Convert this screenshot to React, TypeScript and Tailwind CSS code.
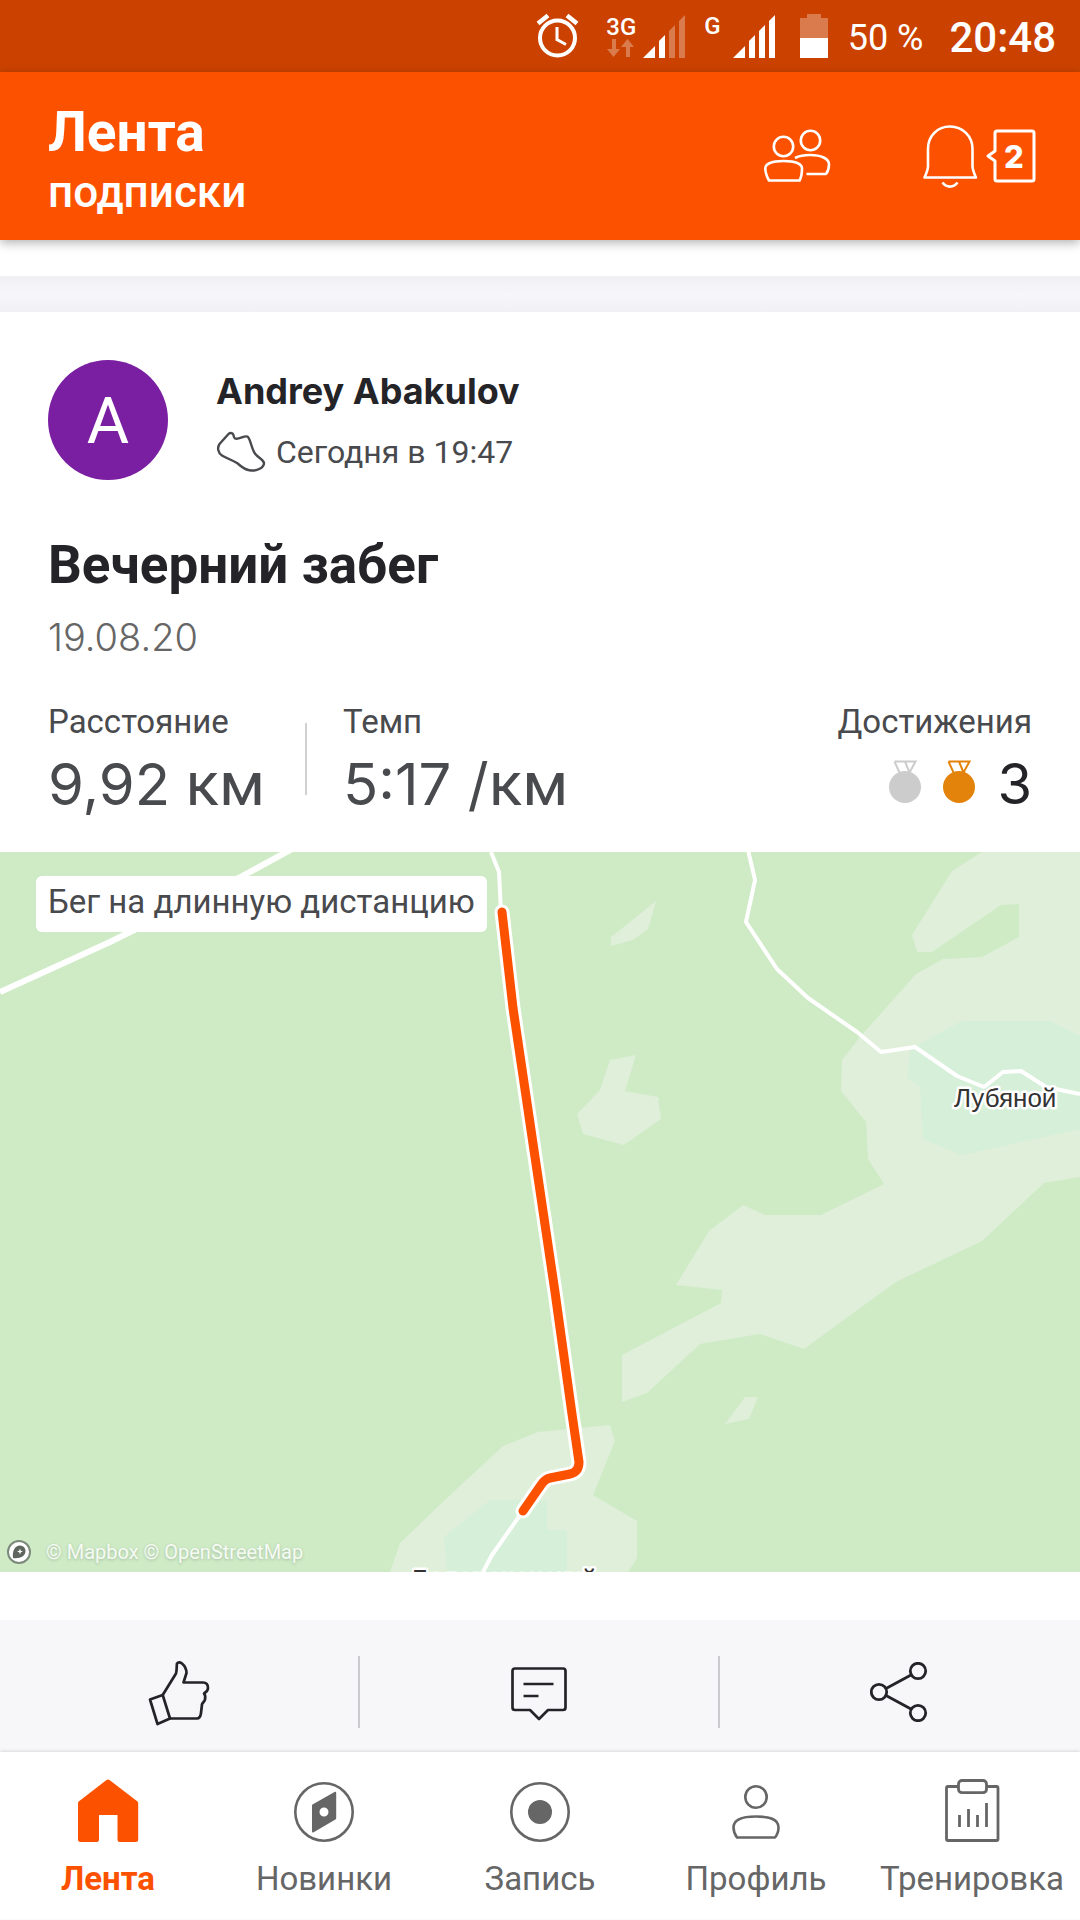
import type { ReactNode } from "react";

const tabs = [
  { id: "feed", label: "Лента", icon: <HomeIcon /> },
  { id: "explore", label: "Новинки", icon: <CompassIcon /> },
  { id: "record", label: "Запись", icon: <RecordIcon /> },
  { id: "profile", label: "Профиль", icon: <ProfileIcon /> },
  { id: "training", label: "Тренировка", icon: <TrainingIcon /> },
];

function HomeIcon() {
  return (
    <svg width="64" height="64" viewBox="0 0 64 64" fill="currentColor">
      <path d="M30.5 1q1.500-1.200 3 0L61.500 22.500q.7.600.7 1.500V60.500q0 2.500-2.500 2.500H44q-2.500 0-2.500-2.500V36H23V60.500q0 2.500-2.500 2.500H4.500Q2 63 2 60.500V24q0-.9.700-1.500Z" />
    </svg>
  );
}

function CompassIcon() {
  return (
    <svg width="64" height="64" viewBox="0 0 64 64" fill="none">
      <circle cx="32" cy="33" r="28.700" stroke="currentColor" strokeWidth="2.600" />
      <path
        fill="currentColor"
        fillRule="evenodd"
        d="M20.500 25.500 42.500 13q1.700-.8 1.700 1V39q0 1-.8 1.500L21.700 53.200Q20 54 20 52.200V26.500q0-.6.5-1ZM32 28.500a4.500 4.500 0 1 0 0 9 4.500 4.500 0 0 0 0-9Z"
      />
    </svg>
  );
}

function RecordIcon() {
  return (
    <svg width="64" height="64" viewBox="0 0 64 64" fill="none">
      <circle cx="32" cy="33" r="28.700" stroke="currentColor" strokeWidth="2.600" />
      <circle cx="32" cy="33" r="12" fill="currentColor" />
    </svg>
  );
}

function ProfileIcon() {
  return (
    <svg width="64" height="64" viewBox="0 0 64 64" fill="none" stroke="currentColor" strokeWidth="2.600">
      <circle cx="32" cy="18" r="10.700" />
      <path strokeLinejoin="round" d="M13 58.500C10.500 55 9.500 52 9.500 48.500 9.500 40 19 37.500 32 37.500S54.500 40 54.500 48.500C54.500 52 53.500 55.500 51 58.500Z" />
    </svg>
  );
}

function TrainingIcon() {
  return (
    <svg width="64" height="64" viewBox="0 0 64 64" fill="none" stroke="currentColor" strokeWidth="2.800">
      <path d="M18 7.500H8Q6.500 7.500 6.500 9V60Q6.500 61.500 8 61.500H56.500Q58 61.500 58 60V9Q58 7.500 56.500 7.500H46.500" />
      <rect x="18.500" y="1.500" width="28" height="12.200" rx="3.500" />
      <path d="M19.500 36V48M28.500 30V48M37.500 36V48M46.500 24V48" />
    </svg>
  );
}

function Signal({ bars }: { bars: number }) {
  const shapes = ["0,43 12,31 12,43", "16,43 16,26 22,20 22,43", "26,43 26,16 32,10 32,43", "36,43 36,6 42,0 42,43"];
  return (
    <svg width="43" height="43" viewBox="0 0 43 43" fill="white">
      {shapes.map((points, i) => (
        <polygon key={i} points={points} opacity={i < bars ? 1 : 0.3} />
      ))}
    </svg>
  );
}

function StatusBar() {
  return (
    <div className="flex h-[72px] items-center justify-end bg-[#cb4200] pr-6 text-white">
      <svg className="mr-7" width="43" height="46" viewBox="0 0 43 46" fill="none" stroke="white">
        <circle cx="21.500" cy="25" r="17.500" strokeWidth="4" />
        <path d="M2 10.500 12 2.500M41 10.500 31 2.500" strokeWidth="4.500" />
        <path d="M21 14V26.500L30 31.500" strokeWidth="3" />
      </svg>
      <div className="mr-2 flex w-7 flex-col items-center">
        <span className="text-2xl font-medium leading-6">3G</span>
        <svg width="28" height="18" viewBox="0 0 28 18" fill="white" opacity="0.300">
          <path d="M5 0h4v10h4L6.500 18 0 10h5ZM19 18h4V8h4L20.500 0 14 8h5Z" />
        </svg>
      </div>
      <Signal bars={2} />
      <span className="mb-5 ml-[18px] mr-3 text-2xl font-medium leading-6">G</span>
      <Signal bars={4} />
      <svg className="ml-6 mr-5" width="28" height="44" viewBox="0 0 28 44" fill="white">
        <path d="M0 4H7V0H21V4H28V24H0Z" opacity="0.300" />
        <path d="M0 24H28V44H0Z" />
      </svg>
      <span className="mr-[26px] pt-1 text-[36px] leading-10">50 %</span>
      <span className="pt-1 text-[42px] font-medium leading-10">20:48</span>
    </div>
  );
}

function Header() {
  return (
    <header className="relative z-10 flex items-center justify-between bg-[#fc5200] pl-12 pr-11 text-white shadow-[0_3px_10px_rgba(0,0,0,0.3)]">
      <div className="pb-5 pt-7">
        <h1 className="text-[55px] font-bold leading-[64px]">Лента</h1>
        <p className="text-[44px] font-medium leading-[56px]">подписки</p>
      </div>
      <div className="flex items-center">
        <button type="button" aria-label="Друзья" className="mr-[89px]">
          <svg width="70" height="56" viewBox="0 0 70 56" fill="none" stroke="white" strokeWidth="2.600" strokeLinejoin="round">
            <circle cx="20.500" cy="18.500" r="9.700" />
            <circle cx="47.500" cy="12.500" r="9.700" />
            <path d="M6 52.500C3.500 48 2.300 44 2.300 40.500 2.300 35.500 10 33 20.500 33S39 35.500 39 40.500C39 45 38.500 49 36.500 52.500Z" />
            <path d="M32 30C36 28 41 27 47 27 58 27 66 30.500 66 36.500 66 40.500 65 43.500 63 46H43.500" />
          </svg>
        </button>
        <button type="button" aria-label="Уведомления" className="flex items-center gap-2">
          <svg width="56" height="66" viewBox="0 0 56 66" fill="none" stroke="white" strokeWidth="2.600" strokeLinejoin="round">
            <path d="M2.500 54.500C4.500 50 6 47 6 43V26C6 13 15.500 3.500 28 3.500S50.500 13 50.500 26V43C50.500 47 52 50 54 54.500Z" />
            <path d="M20.500 59.500C24.500 65 31.500 65 35.500 59.500" />
          </svg>
          <svg width="50" height="56" viewBox="0 0 50 56" fill="none" stroke="white" strokeWidth="3" strokeLinejoin="round">
            <path d="M11 3H46Q48 3 48 5V51Q48 53 46 53H11Q9 53 9 51V33L2 28 9 23V5Q9 3 11 3Z" />
            <text x="28" y="40" textAnchor="middle" fill="white" stroke="none" className="font-['Inter'] text-[31px] font-extrabold">
              2
            </text>
          </svg>
        </button>
      </div>
    </header>
  );
}

function Stat({ label, children }: { label: string; children: ReactNode }) {
  return (
    <div>
      <dt className="text-[33px] leading-10 text-[#494a4d]">{label}</dt>
      <dd className="mt-[10px] text-[62px] leading-[64px] text-[#494a4d]">{children}</dd>
    </div>
  );
}

function Medal({ color }: { color: string }) {
  return (
    <svg width="32" height="48" viewBox="0 0 32 48" fill="none" stroke={color} strokeWidth="2">
      <path d="M5.500 1.500H26.500L20.500 12.500M10.500 12.500 5.500 1.500M16 1.500 20.500 12.500" />
      <circle cx="16" cy="27" r="16" fill={color} stroke="none" />
    </svg>
  );
}

function RouteMap() {
  return (
    <div className="relative overflow-hidden bg-[#ceebc6]">
      <svg className="block h-auto w-full" viewBox="0 0 1080 720" fill="none">
        {/* Fields */}
        <g fill="#dfefd9">
          <path d="M982 0 952 19 912 83 917 100H932L1001 53 1019 52V85L982 105 943 107 916 122 860 185 842 208 841 239 866 270 868 307 884 332 821 363H765L743 353 709 379 676 433 722 438 721 451 622 503V550L647 541 700 492 760 482 804 497 896 430 982 389 1044 331 1080 325V0Z" />
          <path d="M656 49 611 85V94L633 88 648 77Z" />
          <path d="M636 203 610 208 600 238 577 262 583 282 624 293 661 267 658 245 625 239Z" />
          <path d="M758 545H745L725 572 749 567Z" />
          <path d="M610 573 615 589 593 643 637 669V706L628 720H390L400 691 447 646 503 594 538 580Z" />
        </g>
        {/* Villages */}
        <g fill="#d6efd8">
          <path d="M1080 184 1050 169H962L910 197 908 226 920 235 923 287 962 303 1080 277Z" />
          <path d="M447 720 444 685 490 648H547V678H567V720Z" />
        </g>
        {/* Roads */}
        <g stroke="white" strokeWidth="4" strokeLinejoin="round">
          <path strokeWidth="6" d="M292-3 237 27 110 90 0 140" />
          <path d="M491 0 499 20 501 60M523 659 492 703 483 720" />
          <path d="M748-2 755 28 746 70 777 117 808 146 857 180 881 200 915 195 957 224 984 235 1003 220 1021 219 1046 235 1080 242" />
        </g>
        {/* Track */}
        <g strokeLinecap="round" strokeLinejoin="round">
          <path stroke="white" strokeWidth="15" d="M502 60 513 156 535 305 555 440 572 562 579 610Q579 620 570 622L550 626Q545 627 541 633L523 659" />
          <path stroke="#fc5200" strokeWidth="9" d="M502 60 513 156 535 305 555 440 572 562 579 610Q579 620 570 622L550 626Q545 627 541 633L523 659" />
        </g>
        <g fill="#333" stroke="white" strokeWidth="5" strokeLinejoin="round" paintOrder="stroke" className="font-['Liberation_Sans',sans-serif] text-[26px]">
          <text x="954" y="255">Лубяной</text>
          <text x="412" y="736">Белореченский</text>
        </g>
      </svg>
      <span className="absolute left-9 top-6 rounded-md bg-white px-3 pb-[10px] pt-[6px] text-[33px] leading-10 text-[#494a4d]">
        Бег на длинную дистанцию
      </span>
      <div className="absolute bottom-1 left-[6px] flex items-center gap-[14px] text-xl leading-8 text-white">
        <svg width="26" height="26" viewBox="0 0 26 26">
          <circle cx="13" cy="13" r="11" fill="white" stroke="#7b8a7b" strokeWidth="2" />
          <path fill="#5f665f" d="M7 19C6 12 9 6.500 14 6.500A5.500 5.500 0 0 1 19.500 12C19.500 17 14 20 7 19Z" />
          <path fill="white" d="M14 9.500 14.800 11.700 17 12.500 14.800 13.300 14 15.500 13.200 13.300 11 12.500 13.200 11.700Z" />
        </svg>
        <span className="opacity-80 [text-shadow:0_1px_3px_rgba(0,0,0,0.25)]">
          <a href="#mapbox">© Mapbox</a> <a href="#osm">© OpenStreetMap</a>
        </span>
      </div>
    </div>
  );
}

function ActivityCard() {
  return (
    <article className="bg-white pt-12">
      <div className="px-12">
        {/* Athlete */}
        <div className="flex h-[120px] items-center">
          <div className="flex h-[120px] w-[120px] items-center justify-center rounded-full bg-[#7b1fa2] pt-1 text-[65px] text-white">
            A
          </div>
          <div className="ml-12">
            <p className="font-['Inter'] text-[36px] font-bold leading-[54px] text-[#242428]">Andrey Abakulov</p>
            <p className="mt-[10px] flex items-center gap-[10px] text-[32px] leading-12 text-[#494a4d]">
              <svg width="50" height="42" viewBox="0 0 50 42" fill="none" stroke="currentColor" strokeWidth="2.400" strokeLinejoin="round">
                <path d="M12.500 3 3.500 13C1 17 2 22 6 24.500 10 27 16 29 21 32 25 35 28 39 35 39.500 41 40 48 37 48 32 47.500 28 41 27 38 21 35 15 34.500 9 32 6 29.500 3.500 23 9 19 7.500 17 6.500 18.500 4 16.500 2.500 15 1.500 13.500 2 12.500 3Z" />
              </svg>
              Сегодня в 19:47
            </p>
          </div>
        </div>

        <h2 className="mt-[55px] text-[53px] font-bold leading-[60px] text-[#242428]">Вечерний забег</h2>
        <p className="mt-[18px] font-['Inter'] text-[38px] font-light leading-12 text-[#666]">19.08.20</p>

        {/* Stats */}
        <dl className="mt-[41px] flex pb-9">
          <Stat label="Расстояние">
            <span className="font-['Inter'] text-[58px]">9,92</span> км
          </Stat>
          <div className="ml-10 mr-9 mt-[21px] h-[72px] w-[2px] bg-[#d0d0d3]" />
          <Stat label="Темп">
            <span className="font-['Inter'] text-[58px]">5:17 /</span>км
          </Stat>
          <div className="ml-auto">
            <dt className="text-[33px] leading-10 text-[#494a4d]">Достижения</dt>
            <dd className="mt-[10px] flex items-center justify-end gap-[22px] font-['Inter'] text-[56px] leading-[64px] text-[#242428]">
              <Medal color="#ccc" />
              <Medal color="#e3830c" />
              <span>3</span>
            </dd>
          </div>
        </dl>
      </div>

      <RouteMap />

      {/* Actions */}
      <div className="mt-12 grid grid-cols-3 divide-x-2 divide-[#ccccd0] bg-[#f7f7fa] pb-6 pt-9 text-[#242428]">
        <button type="button" aria-label="Нравится" className="flex h-[72px] items-center justify-center">
          <svg width="80" height="80" viewBox="0 0 80 80" fill="none" stroke="currentColor" strokeWidth="2.700" strokeLinejoin="round">
            <path d="M11 47.500 23.700 43 31 66.500 18.500 72Z" />
            <path d="M23.700 43 37 21.500C38 18 37.500 14 38 11.500 39 10 41 10 43 11.500 46.500 14.500 47.500 17.500 47.500 21L44.500 30.500H64C67.500 30.500 69 33 69 36 69 39 67 40 65 41.500 66.500 43 66.500 45 66 47.500 65.500 50 63 51 63 52.500L62 61C61.500 65 60 66.500 58 66.500H31" />
          </svg>
        </button>
        <button type="button" aria-label="Комментировать" className="flex h-[72px] items-center justify-center">
          <svg width="58" height="58" viewBox="0 0 58 58" fill="none" stroke="currentColor" strokeWidth="2.700" strokeLinejoin="round">
            <path d="M5 5.500H53Q55.500 5.500 55.500 8V44.500Q55.500 47 53 47H38L29 56 20 47H5Q2.500 47 2.500 44.500V8Q2.500 5.500 5 5.500Z" />
            <path d="M13.500 21H43.500M13.500 33H28.500" />
          </svg>
        </button>
        <button type="button" aria-label="Поделиться" className="flex h-[72px] items-center justify-center">
          <svg width="60" height="60" viewBox="0 0 60 60" fill="none" stroke="currentColor" strokeWidth="2.800">
            <circle cx="9" cy="30" r="7.700" />
            <circle cx="48" cy="9" r="7.700" />
            <circle cx="48" cy="51" r="7.700" />
            <path d="M16 26.500 41 13M16 33.500 41 47" />
          </svg>
        </button>
      </div>
    </article>
  );
}

export default function App() {
  return (
    <div className="min-h-screen bg-white font-['Roboto',sans-serif]">
      <StatusBar />
      <Header />
      <main>
        <div className="h-9 bg-white" />
        <div className="h-9 bg-gradient-to-b from-[#f0f0f4] via-[#f7f7fb] to-[#f0f0f5]" />
        <ActivityCard />
      </main>
      <nav className="relative grid grid-cols-5 bg-white pb-5 pt-[27px] shadow-[0_-1px_3px_rgba(0,0,0,0.12)]">
        {tabs.map((tab) => (
          <a
            key={tab.id}
            href={`#${tab.id}`}
            className={`flex flex-col items-center gap-4 text-[33px] leading-10 ${
              tab.id === "feed" ? "font-bold text-[#fc5200]" : "text-[#666]"
            }`}
          >
            {tab.icon}
            {tab.label}
          </a>
        ))}
      </nav>
    </div>
  );
}
